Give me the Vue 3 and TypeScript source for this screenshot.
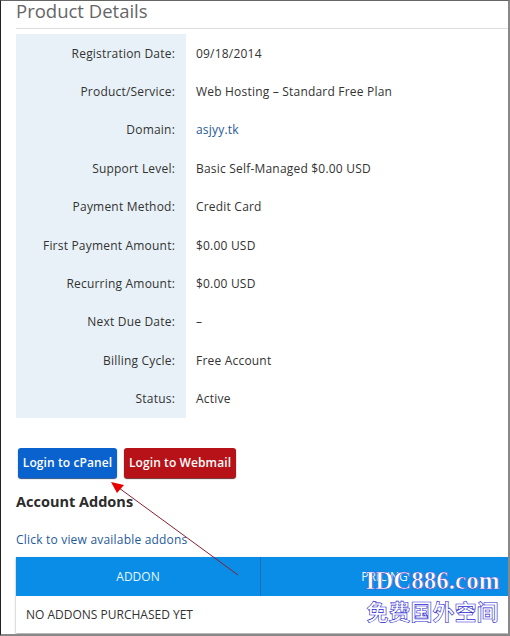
<template>
  <div class="page">
    <h3 class="title">Product Details</h3>
    <div class="details">
      <template v-for="row in rows" :key="row.label">
        <div class="label">{{ row.label }}:</div>
        <div class="value">
          <a v-if="row.link" class="link">{{ row.value }}</a>
          <template v-else>{{ row.value }}</template>
        </div>
      </template>
    </div>
    <div class="buttons">
      <a class="btn blue">Login to cPanel</a>
      <a class="btn red">Login to Webmail</a>
    </div>
    <h4 class="addons-title">Account Addons</h4>
    <a class="link addons-link">Click to view available addons</a>
    <div class="addons">
      <div class="addons-head">
        <div class="head-cell">ADDON</div>
        <div class="head-cell">PRICING</div>
      </div>
      <div class="addons-row">NO ADDONS PURCHASED YET</div>
    </div>

    <svg class="arrow" width="510" height="636" viewBox="0 0 510 636">
      <line x1="238" y1="575" x2="119" y2="488" stroke="#8a2030" stroke-width="1" />
      <path d="M111 482 L124 485 L117 493 Z" fill="#e60000" />
    </svg>
    <div class="mark">
      <div class="mark-en">IDC886.com</div>
      <div class="mark-cn">免费国外空间</div>
    </div>
  </div>
</template>

<script setup lang="ts">
interface Row {
  label: string
  value: string
  link?: boolean
}

const rows: Row[] = [
  { label: 'Registration Date', value: '09/18/2014' },
  { label: 'Product/Service', value: 'Web Hosting – Standard Free Plan' },
  { label: 'Domain', value: 'asjyy.tk', link: true },
  { label: 'Support Level', value: 'Basic Self-Managed $0.00 USD' },
  { label: 'Payment Method', value: 'Credit Card' },
  { label: 'First Payment Amount', value: '$0.00 USD' },
  { label: 'Recurring Amount', value: '$0.00 USD' },
  { label: 'Next Due Date', value: '–' },
  { label: 'Billing Cycle', value: 'Free Account' },
  { label: 'Status', value: 'Active' }
]
</script>

<style>
html,
body {
  margin: 0;
  background: #fff;
}
</style>

<style scoped>
.page {
  position: relative;
  box-sizing: border-box;
  width: 510px;
  height: 636px;
  overflow: hidden;
  background: #fff;
  border-top: 1px solid #666;
  border-left: 1px solid #222;
  border-right: 2px solid #888;
  border-bottom: 2px solid #888;
  padding: 0 0 0 15px;
  font-family: "Open Sans", sans-serif;
  font-size: 12px;
  letter-spacing: 0.2px;
  color: #333;
}

.title {
  margin: 0;
  height: 27px;
  border-bottom: 1px solid #ddd;
  font-size: 18.5px;
  font-weight: 400;
  line-height: 20px;
  letter-spacing: 0;
  color: #666;
}

.details {
  display: grid;
  grid-template-columns: 170px 1fr;
  grid-auto-rows: 38.4px;
  margin-top: 5px;
}

.label {
  display: flex;
  align-items: center;
  justify-content: flex-end;
  padding-right: 11px;
  background: #e8f1f7;
}

.value {
  display: flex;
  align-items: center;
  padding-left: 10px;
}

.link {
  color: #1f5a9a;
}

.buttons {
  display: flex;
  gap: 7px;
  margin: 30px 0 0 2px;
}

.btn {
  display: flex;
  align-items: center;
  justify-content: center;
  height: 30px;
  border-radius: 3px;
  color: #fff;
  font-weight: 600;
  letter-spacing: 0.1px;
}

.blue {
  width: 99px;
  background: #0a62cf;
  box-shadow: 0 1px 1px #2a4f80;
}

.red {
  width: 112px;
  background: #b71218;
  box-shadow: 0 1px 1px #6b2a2a;
}

.addons-title {
  margin: 14px 0 0;
  font-size: 14.5px;
  line-height: 20px;
  letter-spacing: 0;
  font-weight: 700;
  color: #2b2b2b;
}

.addons-link {
  display: block;
  margin-top: 19px;
  line-height: 18px;
}

.addons {
  margin-top: 8px;
  box-shadow: 0 1px 2px #999;
}

.addons-head {
  display: grid;
  grid-template-columns: 244px 1fr;
  height: 39px;
  background: #0a8de6;
  color: #e4f6ff;
  letter-spacing: 0;
}

.head-cell {
  display: flex;
  align-items: center;
  justify-content: center;
}

.head-cell + .head-cell {
  border-left: 1px solid #1a70b8;
}

.addons-row {
  display: flex;
  align-items: center;
  height: 37px;
  padding-left: 10px;
  letter-spacing: 0;
}

.arrow {
  position: absolute;
  top: -1px;
  left: -1px;
  pointer-events: none;
}

.mark {
  position: absolute;
  top: 566px;
  left: 364px;
  width: 135px;
  letter-spacing: 0;
  text-align: center;
}

.mark-en {
  font-family: "Liberation Serif", serif;
  font-size: 25px;
  font-weight: 700;
  line-height: 28px;
  white-space: nowrap;
  color: #fff;
  -webkit-text-stroke: 0.6px #5a4fd0;
}

.mark-cn {
  margin-top: 0;
  font-family: "Noto Sans CJK SC", sans-serif;
  font-size: 22px;
  font-weight: 700;
  line-height: 30px;
  white-space: nowrap;
  color: #fff;
  -webkit-text-stroke: 0.6px #2a1fd0;
}
</style>
